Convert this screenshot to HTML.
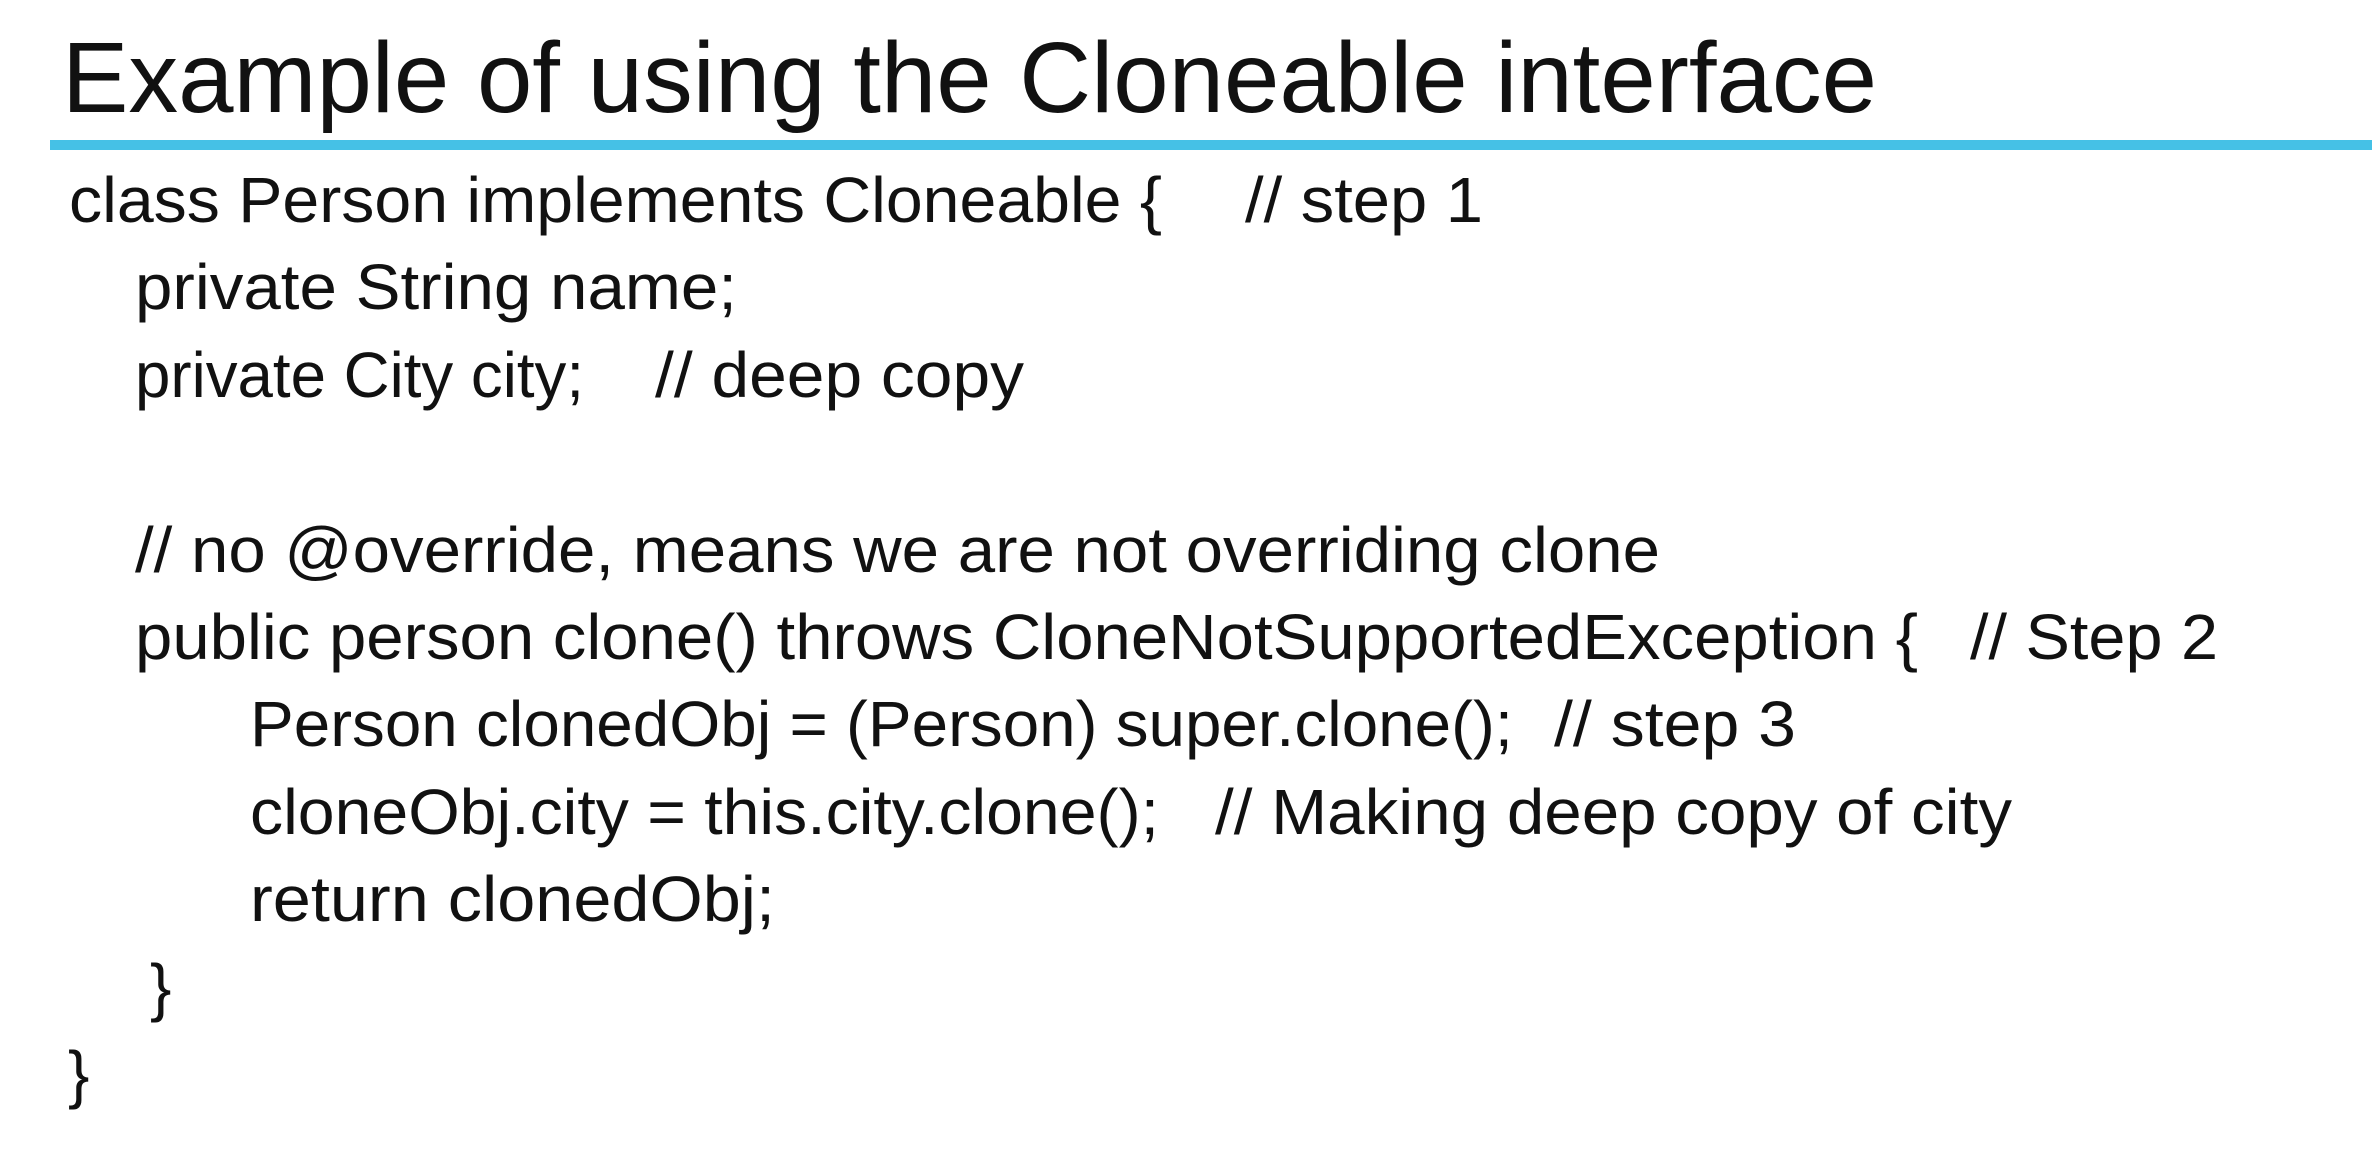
<!DOCTYPE html>
<html><head><meta charset="utf-8"><style>
html,body{margin:0;padding:0;background:#fff;}
svg{display:block;}
text{font-family:"Liberation Sans",sans-serif;fill:#111;}
</style></head><body>
<svg width="2372" height="1176" viewBox="0 0 2372 1176" xmlns="http://www.w3.org/2000/svg">
<rect width="2372" height="1176" fill="#fff"/>
<text x="62" y="112" font-size="100" textLength="1815" lengthAdjust="spacingAndGlyphs">Example of using the Cloneable interface</text>
<rect x="50" y="140" width="2322" height="10" fill="#45c1e6"/>
<g font-size="64">
<text x="69" y="222" textLength="1093" lengthAdjust="spacingAndGlyphs">class Person implements Cloneable {</text>
<text x="1245" y="222" textLength="238" lengthAdjust="spacingAndGlyphs">// step 1</text>
<text x="135" y="309" textLength="602" lengthAdjust="spacingAndGlyphs">private String name;</text>
<text x="135" y="397" textLength="449" lengthAdjust="spacingAndGlyphs">private City city;</text>
<text x="655" y="397" textLength="369" lengthAdjust="spacingAndGlyphs">// deep copy</text>
<text x="135" y="572" textLength="1525" lengthAdjust="spacingAndGlyphs">// no @override, means we are not overriding clone</text>
<text x="135" y="659" textLength="1783" lengthAdjust="spacingAndGlyphs">public person clone() throws CloneNotSupportedException {</text>
<text x="1970" y="659" textLength="248" lengthAdjust="spacingAndGlyphs">// Step 2</text>
<text x="250" y="746" textLength="1263" lengthAdjust="spacingAndGlyphs">Person clonedObj = (Person) super.clone();</text>
<text x="1554" y="746" textLength="242" lengthAdjust="spacingAndGlyphs">// step 3</text>
<text x="250" y="834" textLength="909" lengthAdjust="spacingAndGlyphs">cloneObj.city = this.city.clone();</text>
<text x="1215" y="834" textLength="797" lengthAdjust="spacingAndGlyphs">// Making deep copy of city</text>
<text x="250" y="921" textLength="525" lengthAdjust="spacingAndGlyphs">return clonedObj;</text>
<text x="150" y="1009">}</text>
<text x="68" y="1096">}</text>
</g>
</svg>
</body></html>
